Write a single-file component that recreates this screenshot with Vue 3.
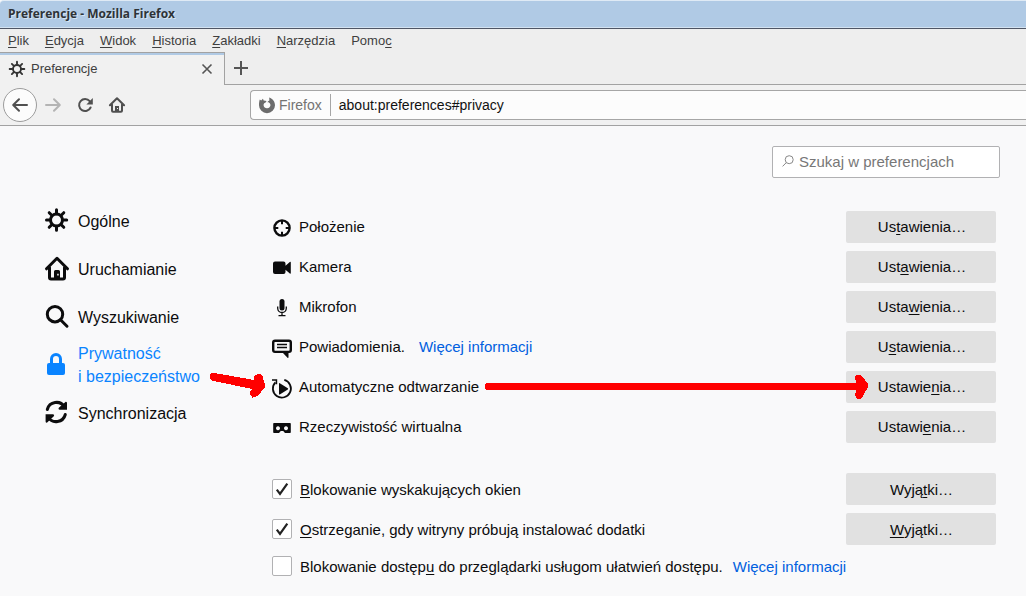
<template>
  <div class="window">
    <header class="titlebar">Preferencje - Mozilla Firefox</header>

    <nav class="menubar">
      <span v-for="item in menu" :key="item.join('')">{{ item[0] }}<u>{{ item[1] }}</u>{{ item[2] }}</span>
    </nav>

    <div class="tabs">
      <div class="tab">
        <svg class="tab-icon" viewBox="0 0 24 24">
          <circle cx="12" cy="12" r="6" class="line" />
          <path class="line" d="M12 1v4M12 19v4M1 12h4M19 12h4M4.3 4.3l3 3M16.7 16.7l3 3M4.3 19.7l3-3M16.7 7.3l3-3" />
        </svg>
        <span class="tab-title">Preferencje</span>
        <svg class="tab-close" viewBox="0 0 12 12"><path d="M1.5 1.5l9 9M10.5 1.5l-9 9" /></svg>
      </div>
      <div class="tab-rest">
        <svg class="tab-add" viewBox="0 0 14 14"><path d="M7 0v14M0 7h14" /></svg>
      </div>
    </div>

    <div class="toolbar">
      <div class="back">
        <svg viewBox="0 0 16 16"><path class="stroke" d="M15 8H1.5M7 2.2L1.2 8L7 13.8" /></svg>
      </div>
      <svg class="tool forward" viewBox="0 0 16 16"><path class="stroke" d="M1 8h13.5M9 2.2L14.8 8L9 13.8" /></svg>
      <svg class="tool reload" viewBox="0 0 16 16">
        <path class="stroke" d="M13.6 10.5A6 6 0 1 1 12.7 4.2" />
        <path d="M15.8 1v6.4H9.4z" />
      </svg>
      <svg class="tool home" viewBox="0 0 16 16">
        <path class="stroke" d="M.9 8.3L8 1.2l7.1 7.1M3 7.5v6.3q0 1 1 1h8q1 0 1-1V7.5" />
        <path fill-rule="evenodd" d="M6 15V9h4v6zM8 11h1v1H8z" />
      </svg>
      <div class="urlbar">
        <svg class="brand" viewBox="0 0 16 16">
          <path d="M10.2.4C13.7 1.6 16 4.7 16 8.2A8 8 0 0 1 0 8.2C0 5.9.3 3.8.8 2.6L2.2 3.5L3.9 1.8L4.7 3.5L7.6 3.9L6.6 5.6L5.2 6.2Q4.4 7 4.6 8.4A3.5 3.5 0 0 0 11.5 8Q11.4 6.2 9.6 5.2L8.4 5.2Q8.8 3.8 10.4 3.4z" />
        </svg>
        <span class="identity">Firefox</span>
        <span class="url">about:preferences#privacy</span>
      </div>
    </div>

    <main class="content">
      <aside class="categories">
        <div v-for="cat in categories" :key="cat.icon" class="category" :class="{ selected: cat.selected }">
          <svg viewBox="0 0 24 24">
            <template v-if="cat.icon === 'gear'">
              <circle cx="11.5" cy="12" r="6" class="line" />
              <path class="line" d="M11.5 1.8v4M11.5 18.2v4M1.5 12h4M17.7 12h4M4.2 4.7l2.6 2.6M16.2 16.7l2.6 2.6M4.2 19.3l2.6-2.6M16.2 7.3l2.6-2.6" />
            </template>
            <template v-else-if="cat.icon === 'home'">
              <path class="line" d="M1.5 12.8L12 2.3l10.5 10.5M4.5 11.5v10q0 1.5 1.5 1.5h12q1.5 0 1.5-1.5v-10" />
              <path fill-rule="evenodd" d="M9 23.5v-8Q9 14 10.500 14h3q1.500 0 1.500 1.500v8zM12.200 17.800h1.500v1.800h-1.500z" />
            </template>
            <template v-else-if="cat.icon === 'search'">
              <circle cx="10" cy="10.200" r="7.700" class="line" />
              <path class="line" d="M15.500 15.700l6.500 6.500" />
            </template>
            <template v-else-if="cat.icon === 'lock'">
              <path d="M4 11h14q2 0 2 2v8q0 2-2 2H4q-2 0-2-2v-8q0-2 2-2z" />
              <path class="line" d="M6.500 11.500V7a4.500 4.500 0 0 1 9 0v4.500" />
            </template>
            <template v-else>
              <path class="line" d="M2.300 9.500A9.500 9.500 0 0 1 19.500 6.800M20.300 14.500A9.500 9.500 0 0 1 3.100 17.200" />
              <path d="M20.700 1.700q1.300 0 1.300 1.300V9.700h-7.500q-1.800-.6-.7-1.900zM1.900 22.800q-1.300 0-1.300-1.300V14.300h7.500q1.800.6.700 1.900z" />
            </template>
          </svg>
          <span>{{ cat.label }}</span>
        </div>
      </aside>

      <section class="pane">
        <div class="search">
          <svg viewBox="0 0 12 12"><circle cx="7.2" cy="4.7" r="4" /><path d="M4.3 7.6L.6 11.4" /></svg>
          <span>Szukaj w preferencjach</span>
        </div>

        <div class="permissions">
          <div v-for="perm in permissions" :key="perm.icon" class="row">
            <svg class="perm-icon" viewBox="0 0 20 20">
              <template v-if="perm.icon === 'location'">
                <circle cx="10" cy="11" r="7.6" class="line" />
                <path class="tick" d="M10 3v4.3M10 14.7V19M2.500 11h3.800M13.700 11h3.800" />
              </template>
              <template v-else-if="perm.icon === 'camera'">
                <path d="M3 4.500h8.500q2 0 2 2v2.300L17.800 5q1-.5 1 .5v10.500q0 1-1 .5l-4.300-3.800v2.300q0 2-2 2H3q-2 0-2-2v-8.500q0-2 2-2z" />
              </template>
              <template v-else-if="perm.icon === 'mic'">
                <rect x="7.5" y="2" width="5" height="11.5" rx="2.5" />
                <path class="thin" d="M5.700 9.500v1.700a4.300 4.300 0 0 0 8.600 0V9.500M10 15.500v3M6.500 18.700h7" />
              </template>
              <template v-else-if="perm.icon === 'bubble'">
                <path class="line" d="M3 3.800h14q1.800 0 1.800 1.800v7.500q0 1.800-1.800 1.800H3q-1.800 0-1.800-1.800V5.600q0-1.800 1.800-1.800z" />
                <path d="M10 15h6.500v5.500q-.3.8-1 .3z" />
                <path class="thin" d="M5 7.500h10M5 10.500h10" />
              </template>
              <template v-else-if="perm.icon === 'play'">
                <path class="ring" d="M3.400 5.300A9 9 0 1 0 12.300 2.900" />
                <path d="M0 2.200h5.200v5H3.700V3.700H0zM7 6.500V17q0 .8.800.4l8-5q.8-.6 0-1.200l-8-5Q7 5.700 7 6.500z" />
              </template>
              <path
                v-else
                fill-rule="evenodd"
                d="M2 6h16q.8 0 .8.8v8.400q0 .8-.8.8h-5L11.200 14H8.800L7 16H2q-.8 0-.8-.8V6.800q0-.8.8-.8zM6 9.200a2 2 0 1 0 .01 0zM14 9.200a2 2 0 1 0 .01 0z"
              />
            </svg>
            <span class="perm-label">{{ perm.label }}</span>
            <a v-if="perm.link" class="link">Więcej informacji</a>
            <button>{{ perm.key[0] }}<u>{{ perm.key[1] }}</u>{{ perm.key[2] }}</button>
          </div>
        </div>

        <div class="options">
          <div v-for="opt in options" :key="opt.label.join('')" class="row">
            <span class="checkbox">
              <svg v-if="opt.checked" viewBox="0 0 18 18"><path d="M3.800 9.700l3.200 4.300L14.300 3.700" /></svg>
            </span>
            <span class="opt-label">{{ opt.label[0] }}<u>{{ opt.label[1] }}</u>{{ opt.label[2] }}</span>
            <a v-if="opt.link" class="link">Więcej informacji</a>
            <button v-if="opt.key">{{ opt.key[0] }}<u>{{ opt.key[1] }}</u>{{ opt.key[2] }}</button>
          </div>
        </div>
      </section>
    </main>

    <!-- red hint arrows drawn over the page -->
    <svg class="arrows" viewBox="0 0 1026 596">
      <path d="M210 375l1.500-2h3l39.500 7v-3.500l3.500-2.500h3l2 2 1 4 1.500 5v2.500l-4 4.500-3.500 4-5 1.500-2.500-2.500v-3l2-3-40.500-8.500-1.500-2z" />
      <path d="M486 383h370.500l-1.500-4v-3l2-1.500h3l3 3 5 6.500v3l-5 9-2.500 2.500h-4l-1.500-3 1-5.500H486l-1-1v-5z" />
    </svg>
  </div>
</template>

<script setup>
// [text before, access key, text after]
const menu = [
  ['', 'P', 'lik'],
  ['', 'E', 'dycja'],
  ['', 'W', 'idok'],
  ['', 'H', 'istoria'],
  ['', 'Z', 'akładki'],
  ['', 'N', 'arzędzia'],
  ['Pomo', 'c', ''],
]

const categories = [
  { icon: 'gear', label: 'Ogólne' },
  { icon: 'home', label: 'Uruchamianie' },
  { icon: 'search', label: 'Wyszukiwanie' },
  { icon: 'lock', label: 'Prywatność\ni bezpieczeństwo', selected: true },
  { icon: 'sync', label: 'Synchronizacja' },
]

const permissions = [
  { icon: 'location', label: 'Położenie', key: ['Us', 't', 'awienia…'] },
  { icon: 'camera', label: 'Kamera', key: ['Ust', 'a', 'wienia…'] },
  { icon: 'mic', label: 'Mikrofon', key: ['Usta', 'w', 'ienia…'] },
  { icon: 'bubble', label: 'Powiadomienia.', key: ['U', 's', 'tawienia…'], link: true },
  { icon: 'play', label: 'Automatyczne odtwarzanie', key: ['Ustawie', 'n', 'ia…'] },
  { icon: 'vr', label: 'Rzeczywistość wirtualna', key: ['Ustawi', 'e', 'nia…'] },
]

const options = [
  { label: ['', 'B', 'lokowanie wyskakujących okien'], checked: true, key: ['Wyją', 't', 'ki…'] },
  { label: ['', 'O', 'strzeganie, gdy witryny próbują instalować dodatki'], checked: true, key: ['', 'W', 'yjątki…'] },
  { label: ['Blokowanie dostęp', 'u', ' do przeglądarki usługom ułatwień dostępu.'], link: true },
]
</script>

<style>
body {
  margin: 0;
  overflow: hidden;
}
</style>

<style scoped>
.window {
  position: relative;
  display: flex;
  flex-direction: column;
  box-sizing: border-box;
  width: 1026px;
  height: 596px;
  overflow: hidden;
  background: #f9f9fa;
  color: #0c0c0d;
  font-family: "Liberation Sans", Arial, sans-serif;
  font-size: 15px;
}

svg {
  display: block;
  flex: none;
  overflow: visible;
  fill: currentColor;
}

u {
  text-decoration-thickness: 1px;
  text-underline-offset: 2px;
  text-decoration-skip-ink: none;
}

.titlebar {
  box-sizing: border-box;
  height: 29px;
  padding-left: 8px;
  border-top: 1px solid #dfeaf5;
  border-bottom: 1px solid #4f5665;
  border-top-left-radius: 4px;
  background: #b0cae5;
  box-shadow: inset 0 -1px #d3e2f1;
  color: #2e3338;
  font: bold 12px/26px "Open Sans", "Noto Sans", sans-serif;
  text-shadow: 1px 1px #d7e5f2;
}

.menubar {
  display: flex;
  gap: 16px;
  height: 23px;
  padding-left: 8px;
  background: #eeeeee;
  color: #3f3f3f;
  font-size: 13px;
  line-height: 24px;
}

.tabs {
  display: flex;
  height: 33px;
  background: #eeeeee;
  color: #4a4a4a;
}

.tab {
  display: flex;
  align-items: center;
  box-sizing: border-box;
  width: 225px;
  padding: 0 11px 0 9px;
  border-top: 1px solid #a2a2a2;
  border-right: 1px solid #a2a2a2;
  background: #f1f1f1;
  box-shadow: inset 0 2px #b0cae5;
}

.tab-icon {
  width: 16px;
  height: 16px;
  color: #333;
}

.tab-icon .line {
  stroke-width: 2.8;
}

.tab-title {
  flex: 1;
  margin-left: 6px;
  padding-bottom: 2px;
  color: #3f3f3f;
  font-size: 13px;
}

.tab-close {
  width: 12px;
  height: 12px;
}

.tab-close path,
.tab-add path {
  fill: none;
  stroke: #555;
  stroke-width: 1.6;
}

.tab-add path {
  stroke-width: 2;
}

.tab-rest {
  flex: 1;
  padding: 9px;
  border-bottom: 1px solid #a2a2a2;
}

.tab-add {
  width: 14px;
  height: 14px;
}

.toolbar {
  display: flex;
  align-items: center;
  box-sizing: border-box;
  height: 41px;
  padding-left: 3px;
  border-bottom: 1px solid #a2a2a2;
  background: #f1f1f1;
  color: #505050;
}

.back {
  display: grid;
  place-items: center;
  box-sizing: border-box;
  width: 34px;
  height: 34px;
  border: 1px solid #9c9c9c;
  border-radius: 50%;
  background: #fcfcfc;
}

.back svg,
.tool {
  width: 16px;
  height: 16px;
}

.stroke {
  fill: none;
  stroke: currentColor;
  stroke-width: 2;
  stroke-linecap: round;
  stroke-linejoin: round;
}

.forward {
  margin-left: 8px;
  color: #b4b4b4;
}

.reload,
.home {
  margin-left: 16px;
}

.urlbar {
  display: flex;
  flex: 1;
  align-items: center;
  box-sizing: border-box;
  height: 30px;
  margin-left: 125px;
  padding-left: 8px;
  border: 1px solid #a6a6a6;
  border-right: 0;
  border-radius: 4px 0 0 4px;
  background: #fcfcfc;
  font-size: 14px;
}

.brand {
  width: 16px;
  height: 16px;
  color: #6c6c6c;
}

.identity {
  margin-left: 4px;
  padding-right: 8px;
  border-right: 1px solid #a6a6a6;
  color: #737373;
  line-height: 22px;
}

.url {
  margin-left: 8px;
  color: #111;
}

.content {
  display: flex;
  flex: 1;
}

.categories {
  width: 227px;
  padding: 71px 0 0 45px;
}

.category {
  display: flex;
  align-items: center;
  gap: 9px;
  height: 48px;
  font-size: 16px;
  line-height: 23px;
  white-space: pre-line;
}

.category svg {
  width: 24px;
  height: 24px;
  margin-top: -2px;
}

.category.selected {
  color: #0a84ff;
}

.line {
  fill: none;
  stroke: currentColor;
  stroke-width: 3;
  stroke-linecap: round;
  stroke-linejoin: round;
}

.pane {
  width: 724px;
  padding-top: 20px;
}

.search {
  display: flex;
  align-items: center;
  gap: 5px;
  box-sizing: border-box;
  width: 228px;
  height: 32px;
  margin-left: 500px;
  padding-left: 9px;
  border: 1px solid #b1b1b3;
  border-radius: 2px;
  background: #fff;
  color: #777;
}

.search svg {
  width: 12px;
  height: 12px;
  margin-top: -2px;
  fill: none;
  stroke: #888;
}

.search span {
  padding-bottom: 2px;
}

.permissions {
  margin-top: 29px;
}

.row {
  display: flex;
  align-items: center;
  height: 40px;
}

.perm-icon {
  width: 20px;
  height: 20px;
}

.perm-icon .line {
  stroke-width: 2.4;
}

.tick {
  fill: none;
  stroke: currentColor;
  stroke-width: 2;
}

.thin {
  fill: none;
  stroke: currentColor;
  stroke-width: 1.3;
}

.ring {
  fill: none;
  stroke: currentColor;
  stroke-width: 1.8;
}

.perm-label {
  margin-left: 7px;
}

.permissions span,
.permissions .link {
  padding-bottom: 2px;
}

.link {
  margin-left: 14px;
  color: #0060df;
}

button {
  width: 150px;
  height: 32px;
  margin-left: auto;
  padding: 0 0 0 2px;
  border: 0;
  border-radius: 2px;
  background: #e1e1e1;
  color: inherit;
  font: inherit;
}

.permissions button {
  padding-bottom: 2px;
}

.options {
  margin-top: 22px;
}

.options button {
  padding-left: 1px;
}

.options .row:last-child {
  height: 34px;
}

.options .link {
  margin-left: 10px;
}

.checkbox {
  box-sizing: border-box;
  width: 20px;
  height: 20px;
  border: 1px solid #b1b1b3;
  border-radius: 2px;
  background: #fff;
}

.checkbox path {
  fill: none;
  stroke: #222;
  stroke-width: 2.2;
}

.opt-label {
  margin-left: 8px;
}

.arrows {
  position: absolute;
  top: 0;
  left: 0;
  width: 1026px;
  height: 596px;
  color: #f00;
  shape-rendering: crispEdges;
}
</style>
